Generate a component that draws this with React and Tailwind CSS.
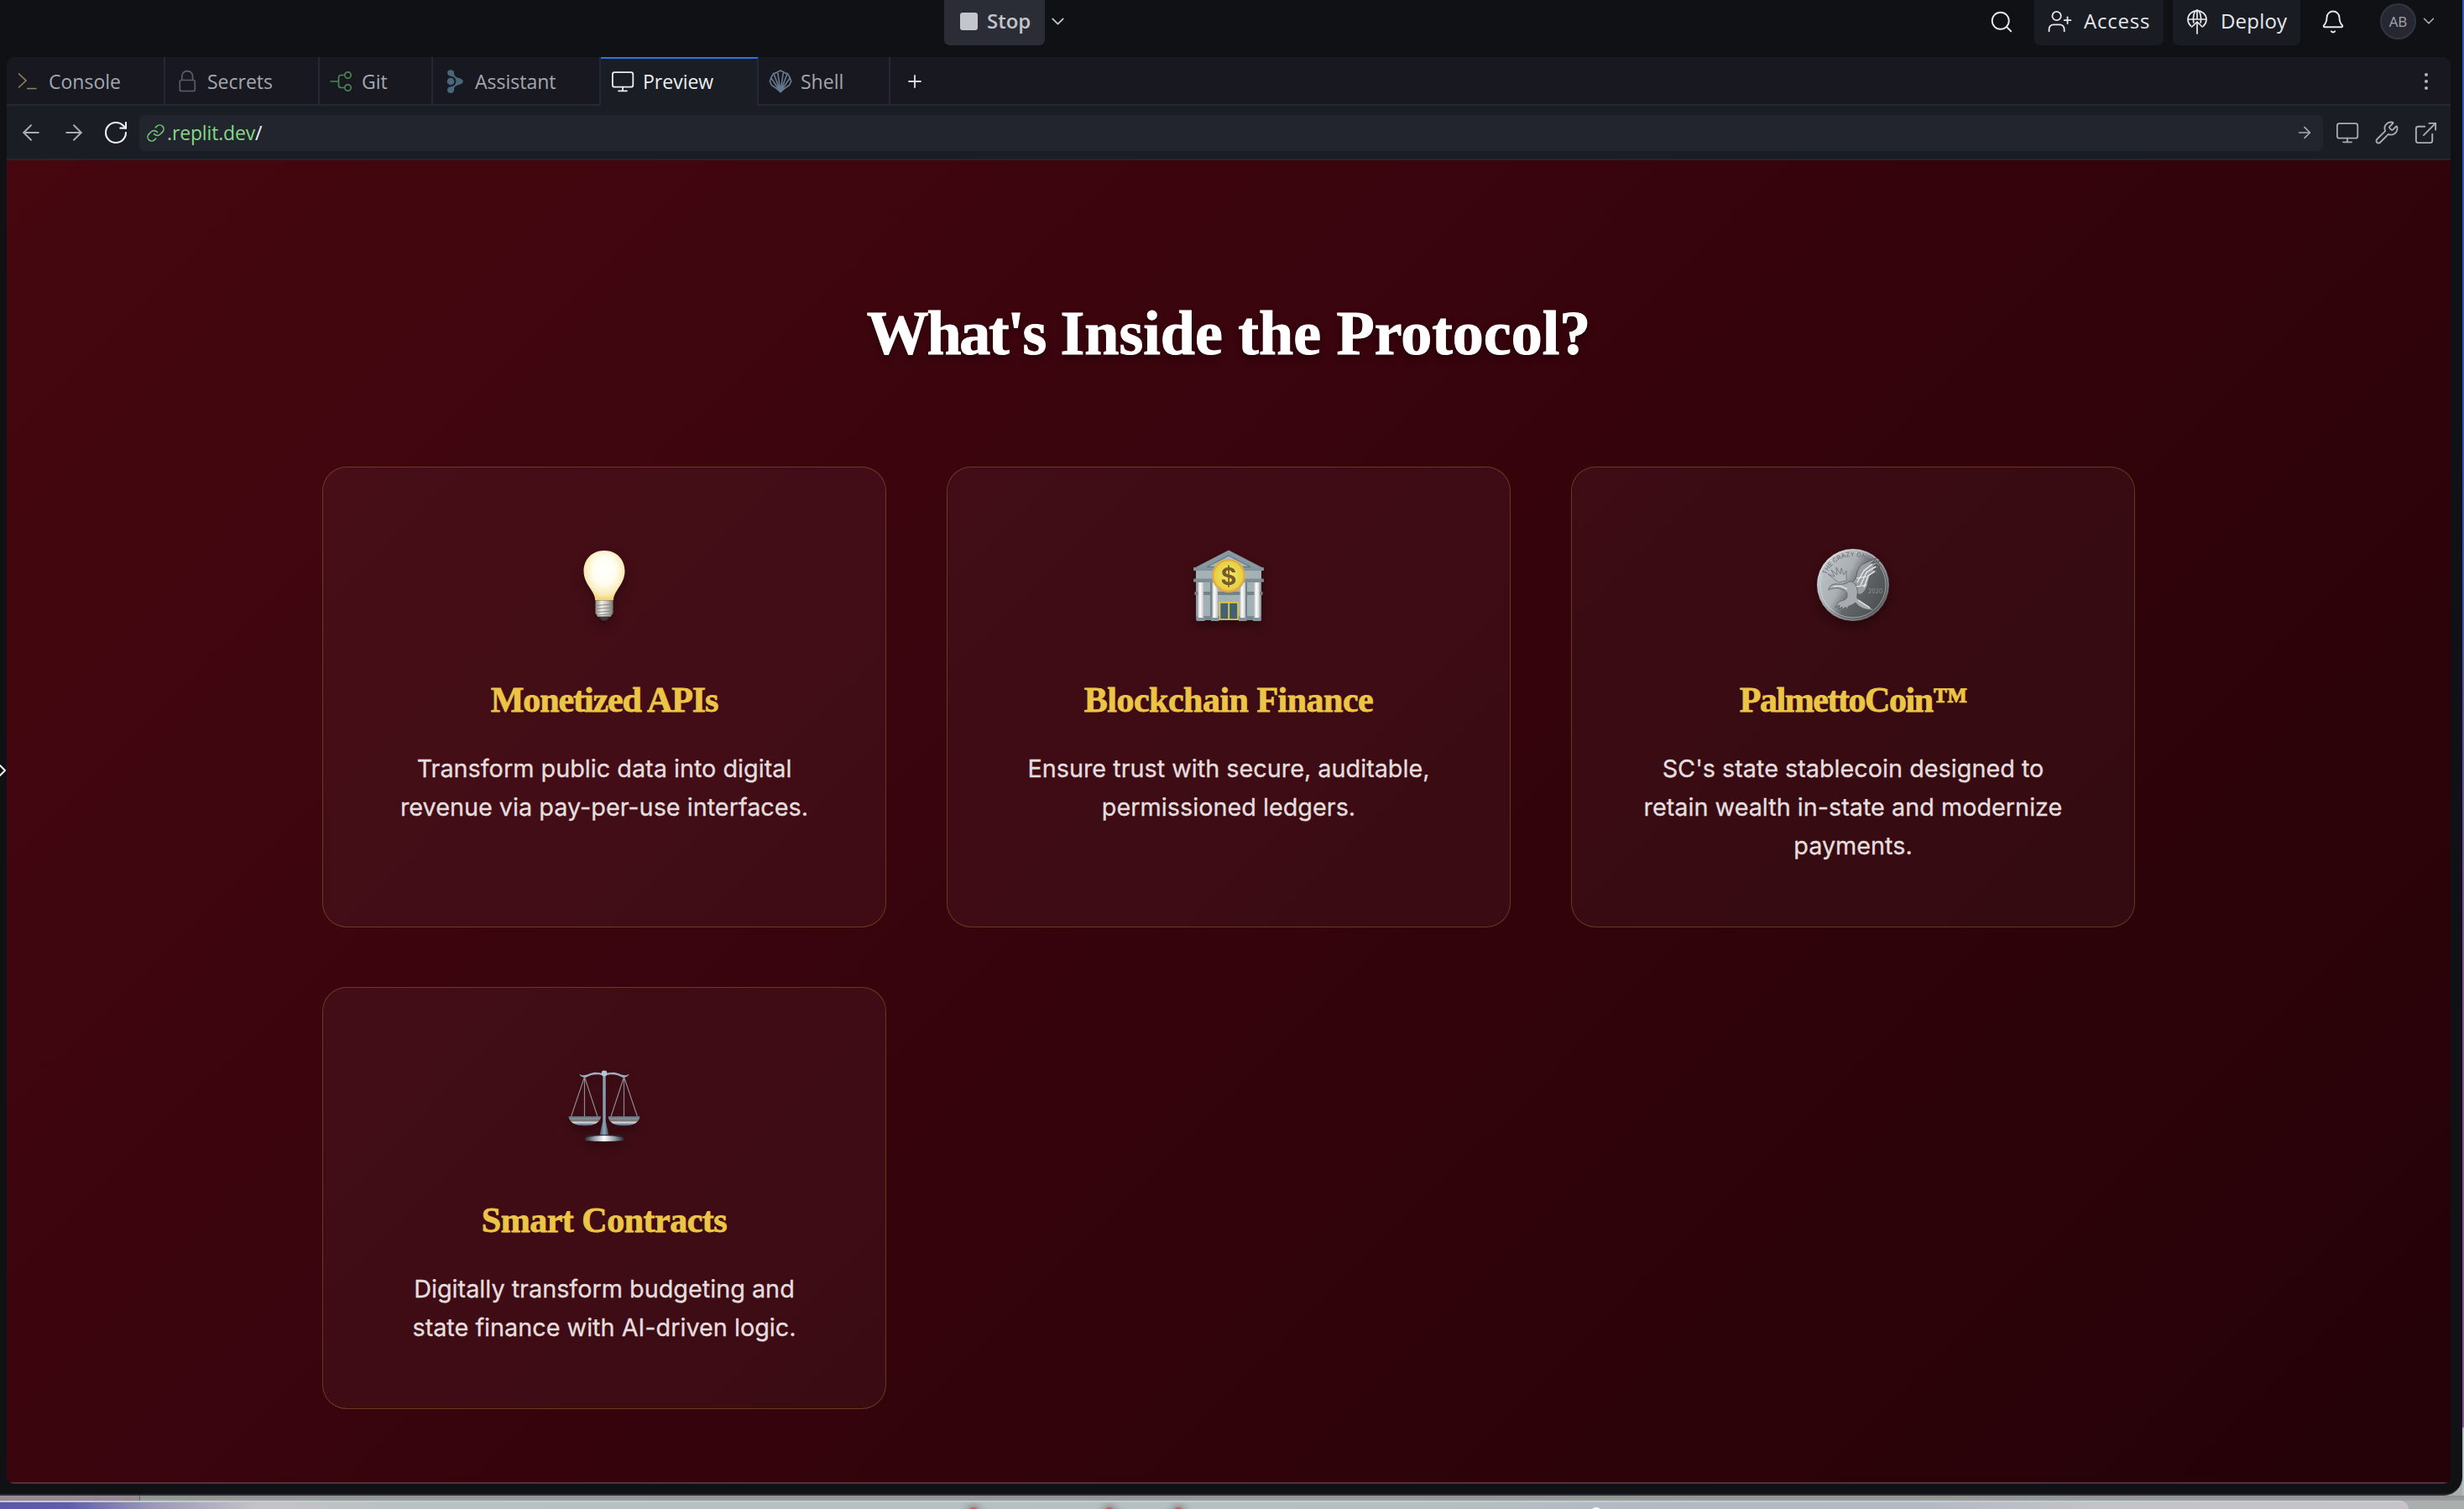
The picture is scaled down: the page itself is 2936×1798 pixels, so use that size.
import React from "react";
import {
  Search,
  UserPlus,
  Bell,
  ChevronDown,
  ChevronRight,
  Plus,
  ArrowLeft,
  ArrowRight,
  RotateCw,
  Link,
  Wrench,
  ExternalLink,
} from "lucide-react";

/* ---------- Tool icons ---------- */

const Svg = ({ children, className = "" }) => (
  <svg viewBox="0 0 30 30" fill="none" className={"h-[30px] w-[30px] shrink-0 " + className}>
    {children}
  </svg>
);

const ConsoleIcon = () => (
  <Svg>
    <path d="M3 5.5l9 8.5-9 8.5M13 23.5h11.5" stroke="#91845a" strokeWidth="1.6" />
  </Svg>
);

const LockIcon = () => (
  <Svg>
    <rect x="6.3" y="13.5" width="18" height="13" rx="2" stroke="#5c5d69" strokeWidth="1.7" />
    <path d="M8.8 13.5V9a6.4 6.4 0 0 1 12.8 0v4.5" stroke="#5c5d69" strokeWidth="1.7" />
  </Svg>
);

const GitIcon = () => (
  <Svg>
    <path
      d="M1.5 15H11.5M18.5 7.5H14.5a3 3 0 0 0-3 3V19.5a3 3 0 0 0 3 3h4"
      stroke="#4d8553"
      strokeWidth="1.7"
    />
    <circle cx="22.5" cy="7.5" r="3.7" stroke="#4d8553" strokeWidth="1.7" />
    <circle cx="22.5" cy="22.5" r="3.7" stroke="#4d8553" strokeWidth="1.7" />
  </Svg>
);

const AssistantIcon = () => (
  <Svg>
    <g fill="#46687a">
      <circle cx="10" cy="15" r="4.3" />
      <path d="M6 4.500c0-4.500 8-4.500 8 0 0 4 2.200 5.500 5 6.200 3 .8 5.800 2 5.800 4.300s-2.800 3.500-5.800 4.300c-2.800.7-5 2.200-5 6.200 0 4.500-8 4.500-8 0 0-2.500 1.700-4 4-4.300 4-.5 6.300-2.700 6.300-6.200S14 9.300 10 8.800C7.700 8.500 6 7 6 4.500z" />
    </g>
  </Svg>
);

const ShellIcon = () => (
  <Svg>
    <g stroke="#66788d" strokeWidth="1.7" strokeLinejoin="round">
      <path d="M15 27.500L10.500 23.500 4.500 19.500 2.300 15 3.800 10.500 6.500 5.800 10.300 4.600 15 2l4.700 2.600 3.800 1.200 2.700 4.700 1.500 4.500-2.200 4.500-6 4z" />
      <path d="M15 27L3.800 11M15 27L7 6M15 27L11.800 5M15 27L18.200 5M15 27L23 6M15 27L26.200 11" />
    </g>
    <path d="M15 28.500l-5-5.500h10z" fill="#66788d" />
  </Svg>
);

const MonitorIcon = ({ className = "" }) => (
  <Svg className={className}>
    <g stroke="currentColor" strokeWidth="1.8" strokeLinecap="round">
      <rect x="2.9" y="4.2" width="24.4" height="17.5" rx="2.5" />
      <path d="M15 21.700v4.300M10 26.300h10" />
    </g>
  </Svg>
);

const DeployIcon = () => (
  <Svg>
    <g stroke="#e6e8eb" strokeWidth="1.7" strokeLinecap="round" strokeLinejoin="round">
      <path d="M7.500 20A11 10.500 0 1 1 22.500 20" />
      <path d="M10.800 16C9.500 9 11.500 2 15 1c3.500 1 5.500 8 4.200 15" />
      <path d="M4.500 12h21M15 1v10" />
      <path d="M15 29V15.500M8.800 21L15 15l6.200 6" />
    </g>
  </Svg>
);

/* ---------- Top bar ---------- */

function TopBar() {
  return (
    <header className="flex h-[68px] shrink-0 items-start text-[24px] font-medium text-[#e6e8eb]">
      <button className="ml-[1125px] flex h-[54px] w-[120px] items-center rounded-b-[7px] bg-[#2b2d36] pb-[3px] pl-[19px] font-semibold text-[#c2c5ca]">
        <span className="h-[21px] w-[21px] rounded-[3px] bg-[#c2c5ca]" />
        <span className="-mt-px ml-[11px]">Stop</span>
      </button>
      <ChevronDown className="mt-[13px] ml-[3px] h-[25px] w-[25px] text-[#c2c5ca]" strokeWidth={1.7} />

      <div className="mr-[29px] ml-auto flex items-center">
        <Search className="mb-[3px] h-[30px] w-[30px]" strokeWidth={1.5} />
        <button className="ml-[24px] flex h-[54px] w-[154px] items-center rounded-b-[7px] bg-[#1a1c23] pb-[3px] pl-[15px]">
          <UserPlus className="h-[31px] w-[31px]" strokeWidth={1.4} />
          <span className="-mt-px ml-[13px] tracking-[0.8px]">Access</span>
        </button>
        <button className="ml-[11px] flex h-[54px] w-[152px] items-center rounded-b-[7px] bg-[#1a1c23] pb-[3px] pl-[14px]">
          <DeployIcon />
          <span className="-mt-px ml-[13px] tracking-[0.2px]">Deploy</span>
        </button>
        <Bell className="mb-[3px] ml-[24px] h-[30px] w-[30px]" strokeWidth={1.5} />
        <span className="mb-[3px] ml-[41px] flex h-[43px] w-[43px] items-center justify-center rounded-full border-2 border-[#33353f] bg-[#252731] text-[17px] font-normal text-[#a3a6ad]">
          AB
        </span>
        <ChevronDown className="mb-[5px] ml-[4px] h-[22px] w-[22px] text-[#b4b7bd]" strokeWidth={1.6} />
      </div>
    </header>
  );
}

/* ---------- Tabs ---------- */

const tabs = [
  { label: "Console", icon: <ConsoleIcon />, width: "w-[189px]" },
  { label: "Secrets", icon: <LockIcon />, width: "w-[184px]" },
  { label: "Git", icon: <GitIcon />, width: "w-[135px]" },
  { label: "Assistant", icon: <AssistantIcon />, width: "w-[200px]" },
  { label: "Preview", icon: <MonitorIcon />, width: "w-[188px]", active: true },
  { label: "Shell", icon: <ShellIcon />, width: "w-[157px]" },
];

function TabBar() {
  return (
    <nav className="flex h-[58px] shrink-0 bg-[#181820] text-[23px] text-[#a4a7ae]">
      {tabs.map((t) => (
        <div
          key={t.label}
          className={
            "flex items-center gap-[9px] border-r-2 border-[#262831] pl-[11px] " +
            t.width +
            (t.active
              ? " border-t-2 border-t-[#2f72e0] bg-[#1a1d24] pb-[2px] font-medium text-[#eceef0]"
              : " border-b-2 border-b-[#262831] pt-[2px]")
          }
        >
          {t.icon}
          <span>{t.label}</span>
        </div>
      ))}
      <div className="flex flex-1 items-center border-b-2 border-[#262831] pt-[2px] pr-[27px] pl-[17px]">
        <Plus className="h-[24px] w-[24px] text-[#d8dade]" strokeWidth={1.9} />
        <div className="ml-auto flex flex-col gap-[4px]">
          <span className="h-[4px] w-[4px] rounded-full bg-[#b4b6bc]" />
          <span className="h-[4px] w-[4px] rounded-full bg-[#b4b6bc]" />
          <span className="h-[4px] w-[4px] rounded-full bg-[#b4b6bc]" />
        </div>
      </div>
    </nav>
  );
}

function AddressBar() {
  return (
    <div className="flex h-[65px] shrink-0 items-center border-b-2 border-[#22262d] bg-[#1a1d24] pt-px text-[#a9acb3]">
      <ArrowLeft className="ml-[14px] h-[30px] w-[30px]" strokeWidth={1.5} />
      <ArrowRight className="ml-[21px] h-[30px] w-[30px]" strokeWidth={1.5} />
      <RotateCw className="ml-[19px] h-[32px] w-[32px] text-[#eceef0]" strokeWidth={1.6} />
      <div className="ml-[12px] flex h-[43px] flex-1 items-center rounded-[7px] bg-[#22252d] pr-[11px] pl-[8px] text-[23px]">
        <Link className="h-[23px] w-[23px] text-[#6fc276]" strokeWidth={1.7} />
        <span className="ml-[2px] tracking-[-0.15px] text-[#86d884]">.replit.dev</span>
        <span className="text-[#f2f3f4]">/</span>
        <ArrowRight className="ml-auto h-[22px] w-[22px]" strokeWidth={1.7} />
      </div>
      <MonitorIcon className="ml-[14px]" />
      <Wrench className="ml-[17px] h-[30px] w-[30px]" strokeWidth={1.5} />
      <ExternalLink className="mr-[14px] ml-[16px] h-[31px] w-[31px]" strokeWidth={1.5} />
    </div>
  );
}

/* ---------- Card illustrations ---------- */

const Art = ({ children }) => (
  <svg
    viewBox="0 0 92 92"
    className="h-[92px] w-[92px] overflow-visible drop-shadow-[0_5px_6px_rgba(0,0,0,0.35)]"
  >
    {children}
  </svg>
);

const Bulb = () => (
  <Art>
    <defs>
      <radialGradient id="glass" cx="50%" cy="40%" r="62%">
        <stop offset="0" stopColor="#ffffff" />
        <stop offset="0.45" stopColor="#fffdf0" />
        <stop offset="0.78" stopColor="#f9eab4" />
        <stop offset="1" stopColor="#edcd6d" />
      </radialGradient>
      <linearGradient id="screw" x1="0" x2="1">
        <stop offset="0" stopColor="#8d8b88" />
        <stop offset="0.35" stopColor="#f1efec" />
        <stop offset="0.7" stopColor="#bdbab6" />
        <stop offset="1" stopColor="#74716e" />
      </linearGradient>
    </defs>
    <path
      d="M46 4C31 4 21.500 15 21.500 28.500c0 10 5 16 9 22.500 3 4.800 4.400 7.500 4.700 12.500h21.600c.3-5 1.700-7.700 4.700-12.500 4-6.500 9-12.500 9-22.500C70.500 15 61 4 46 4z"
      fill="url(#glass)"
    />
    <path d="M35.500 63.500h21v15l-3 4.500h-15l-3-4.500z" fill="url(#screw)" />
    <path
      d="M35.500 69.500l21-1.500M35.500 73.500l21-1.500M35.500 77.500l21-1.500M37 81l18-1.200"
      stroke="#8a8785"
      strokeWidth="1.1"
    />
    <path d="M39 82.500h14l-4.500 5h-5z" fill="#3b3836" />
  </Art>
);

const Bank = () => (
  <Art>
    <defs>
      <linearGradient id="pillar" x1="0" x2="1">
        <stop offset="0" stopColor="#c9c6ca" />
        <stop offset="0.4" stopColor="#ffffff" />
        <stop offset="1" stopColor="#c4c0c6" />
      </linearGradient>
      <radialGradient id="gold">
        <stop offset="0" stopColor="#f3ea62" />
        <stop offset="1" stopColor="#e6cf43" />
      </radialGradient>
    </defs>
    <rect x="7" y="40" width="78" height="46" fill="#8d9da1" />
    <rect x="12" y="42" width="68" height="40" fill="#a2b1b4" />
    <rect x="5.5" y="53" width="81" height="4" fill="#728388" />
    <rect x="7" y="25" width="78" height="16" fill="#a3b2b4" />
    <path d="M46 3.500L87.500 25h-83z" fill="#8798a0" />
    <path d="M46 10L72 23.500H20z" fill="#a9b9be" stroke="#667880" strokeWidth="1.4" />
    <rect x="4" y="24" width="84" height="4" rx="1" fill="#82939a" />
    <rect x="4" y="37.5" width="84" height="4" rx="1" fill="#7c8d94" />
    <rect x="7" y="82" width="78" height="5" fill="#788a91" />
    <path d="M25.500 42v40M66.500 42v40" stroke="#71838a" strokeWidth="3" />
    <rect x="9.5" y="42" width="6.5" height="42" fill="url(#pillar)" />
    <rect x="26.5" y="42" width="6.5" height="42" fill="url(#pillar)" />
    <rect x="59.5" y="42" width="6.5" height="42" fill="url(#pillar)" />
    <rect x="76.5" y="42" width="6.5" height="42" fill="url(#pillar)" />
    <path d="M8 84h9.500v4H8zM25 84h9.500v4H25zM58 84h9.500v4H58zM75 84h9.500v4H75z" fill="#82949c" />
    <rect x="35.5" y="66" width="21.5" height="20" fill="#426177" stroke="#e8c63c" strokeWidth="1.6" />
    <path d="M46.200 66v20" stroke="#e8d03c" strokeWidth="1.8" />
    <circle cx="46" cy="34" r="20" fill="#e0a94a" />
    <circle cx="46" cy="34" r="17.5" fill="url(#gold)" />
    <text
      x="46"
      y="44.5"
      textAnchor="middle"
      fontFamily="Inter, sans-serif"
      fontWeight="700"
      fontSize="29"
      fill="#775a2c"
    >
      $
    </text>
  </Art>
);

const Coin = () => (
  <Art>
    <defs>
      <linearGradient id="silver" x1="0.1" y1="0.25" x2="0.9" y2="0.7">
        <stop offset="0" stopColor="#b9bec2" />
        <stop offset="0.35" stopColor="#a9aeb2" />
        <stop offset="0.58" stopColor="#64676a" />
        <stop offset="1" stopColor="#505356" />
      </linearGradient>
      <linearGradient id="rim" x1="0" y1="0" x2="1" y2="1">
        <stop offset="0" stopColor="#eef0f2" />
        <stop offset="0.5" stopColor="#9b9fa3" />
        <stop offset="1" stopColor="#4e5154" />
      </linearGradient>
      <path id="legend" d="M14 34A34.500 34.500 0 0 1 76 29" />
    </defs>
    <g transform="translate(0 -1)">
      <circle cx="46" cy="46" r="43" fill="url(#rim)" />
      <circle cx="46" cy="46" r="40.5" fill="url(#silver)" />
      <circle cx="46" cy="46" r="39" fill="none" stroke="#dfe2e4" strokeWidth="0.8" opacity="0.7" />
      <text fontFamily="Inter, sans-serif" fontSize="7.5" fontWeight="600" fill="#787c80">
        <textPath href="#legend">THE CRAZY ONES</textPath>
      </text>
      <text x="64" y="56" fontFamily="Inter, sans-serif" fontSize="7" fill="#8d9194">
        2020
      </text>
      {/* far wing */}
      <path
        d="M29 43L16 33l8 3-4-8 7 6-1-9 5 8 1-7 3 8 3-5 0 12z"
        fill="#b3b8bc"
        stroke="#6b7074"
        strokeWidth="0.8"
      />
      {/* raised wing */}
      <path
        d="M42 45c3-3 7-4 8-10 1-7 4-13 10-15l14-6-7 7 11-4-8 7 8-1-8 5 6 1-7 3c-3 2-4 6-5 11-1 6-4 11-8 14-5 1-11-3-14-12z"
        fill="#9a9ea2"
        stroke="#505458"
        strokeWidth="0.8"
      />
      {/* body, head and tail */}
      <path
        d="M17 52c0-5 5-8 11-7 5 .5 9 0 13-3 5-1 9 3 10 9 1 5-1 8 0 11l20 14c-8 0-17-2-22-9-3 2-6 4-8 4l-3 4-1-3-4 4v-4l-4 3 1-5-5 3 3-6c3-3 8-2 10-5 2-4 1-8-3-10-5-2-8-3-12-2-3 0-4 1-6 2z"
        fill="#a6abaf"
        stroke="#5b6064"
        strokeWidth="0.9"
      />
      <path
        d="M51 43l8-14 10-8M55 46l7-15 11-7M59 49l5-14 8-5M50 48l12-2M50 38l12-2M22 48l9-1 8 4M52 64l14 9"
        fill="none"
        stroke="#eef0f2"
        strokeWidth="1.2"
      />
    </g>
  </Art>
);

const Scales = () => (
  <Art>
    <defs>
      <linearGradient id="pan" x1="0" y1="0" x2="0" y2="1">
        <stop offset="0" stopColor="#8f9ca8" />
        <stop offset="0.45" stopColor="#77736d" />
        <stop offset="0.6" stopColor="#d3dce5" />
        <stop offset="1" stopColor="#3c4e65" />
      </linearGradient>
      <linearGradient id="post" x1="0" x2="1">
        <stop offset="0" stopColor="#3f536b" />
        <stop offset="0.5" stopColor="#92a4b6" />
        <stop offset="1" stopColor="#3a4c62" />
      </linearGradient>
      <linearGradient id="foot" x1="0" x2="1">
        <stop offset="0" stopColor="#2d2f35" />
        <stop offset="0.25" stopColor="#9aa2ad" />
        <stop offset="0.5" stopColor="#ffffff" />
        <stop offset="0.75" stopColor="#9aa2ad" />
        <stop offset="1" stopColor="#2d2f35" />
      </linearGradient>
    </defs>
    <path
      d="M22.500 11L6 60M22.500 11v49M22.500 11L38.500 60M69.500 11L53.500 60M69.500 11v49M69.500 11L86 60"
      stroke="#8a8791"
      strokeWidth="1.2"
      fill="none"
    />
    <path
      d="M16 7.500c4 3 8 1.500 12 0 6-2.500 12-2 18 .5 6-2.500 12-3 18-.5 4 1.500 8 3 12 0-2 4-6 5-9 4-7-4-14-4-21-1.500-7-2.500-14-2.500-21 1.500-3 1-7 0-9-4z"
      fill="#9dafba"
    />
    <path d="M44.200 8h3.600v56l3.700 17h-11L44.200 64z" fill="url(#post)" />
    <circle cx="46" cy="7" r="3.4" fill="#b7c6d2" />
    <path
      d="M3.500 58.500h38.500c-1 7-8 11-19.200 11S4.500 65.500 3.500 58.500zM50.500 58.500h38c-1 7-8 11-19 11s-18-4-19-11z"
      fill="url(#pan)"
    />
    <path d="M4 59h37.500M51 59h37" stroke="#5c7591" strokeWidth="1.4" />
    <path d="M28 80h36c3 1 5 3 5.500 7H22.500c.5-4 2.500-6 5.500-7z" fill="#26272c" />
    <path d="M23 83.500q23-5 46 0v3.500q-23 2-46 0z" fill="url(#foot)" />
  </Art>
);

/* ---------- Page content ---------- */

const cards = [
  {
    art: <Bulb />,
    title: "Monetized APIs",
    tracking: "tracking-[-1.1px]",
    lines: ["Transform public data into digital", "revenue via pay-per-use interfaces."],
  },
  {
    art: <Bank />,
    title: "Blockchain Finance",
    tracking: "tracking-[-0.5px]",
    lines: ["Ensure trust with secure, auditable,", "permissioned ledgers."],
  },
  {
    art: <Coin />,
    title: "PalmettoCoin™",
    tracking: "tracking-[-1.45px]",
    lines: ["SC's state stablecoin designed to", "retain wealth in-state and modernize", "payments."],
  },
  {
    art: <Scales />,
    title: "Smart Contracts",
    tracking: "tracking-[-0.5px]",
    lines: ["Digitally transform budgeting and", "state finance with AI-driven logic."],
  },
];

function Card({ art, title, tracking, lines }) {
  return (
    <article className="flex flex-col items-center rounded-[29px] border border-[#d4a037]/30 bg-white/[0.035] pt-[95px] pb-[73px] text-center">
      {art}
      <h3
        className={
          "mt-[65px] font-['Liberation_Serif',serif] text-[42px] leading-[50px] font-bold text-[#ecc546] [-webkit-text-stroke:0.8px_#ecc546] " +
          tracking
        }
      >
        {title}
      </h3>
      <p className="mt-[34px] font-['Inter',sans-serif] text-[28.8px] leading-[46px] text-[#e5dedf] [-webkit-text-stroke:0.3px_#e5dedf]">
        {lines.map((l) => (
          <span key={l} className="block whitespace-nowrap">
            {l}
          </span>
        ))}
      </p>
    </article>
  );
}

function Preview() {
  return (
    <main className="flex-1 border-b-2 border-[#56303a] bg-[linear-gradient(135deg,#46070f_0%,#3c050e_32%,#34030b_55%,#2c0309_78%,#240208_100%)] pt-[161px]">
      <h1 className="text-center font-['Liberation_Serif',serif] text-[74px] leading-[90px] font-bold text-white [-webkit-text-stroke:1px_white] [text-shadow:0_4px_8px_rgba(0,0,0,0.45)]">
        <span className="tracking-[-2.3px]">What's</span> Inside the Protocol?
      </h1>
      <section className="mx-auto mt-[114px] grid w-[2160px] grid-cols-3 gap-x-[72px] gap-y-[71px]">
        {cards.map((c) => (
          <Card key={c.title} {...c} />
        ))}
      </section>
    </main>
  );
}

/* ---------- Desktop dock under the window ---------- */

function Dock() {
  return (
    <footer className="h-[16px] shrink-0">
      <div className="flex h-[6px]">
        <div className="w-[167px] border-r border-[#5f6a6c] bg-[#988993]" />
        <div className="flex-1 bg-gradient-to-b from-[#8c908e] to-[#9b9e9c]" />
      </div>
      <div className="flex h-[10px] w-[2870px] overflow-hidden rounded-tr-[24px] border-t-2 border-[#c3cccd] bg-[linear-gradient(90deg,#5b58a8_0px,#5f5dab_80px,#9a98b8_180px,#c5c3c8_310px,#b8c1c3_480px,#b5bfc1_1700px,#b2b9c3_2000px,#b4bac3_2300px,#c2c3c8_2500px,#c5c3c9_2870px)] pl-[1154px]">
        <span className="mt-[6px] h-[12px] w-[12px] shrink-0 rounded-full bg-[#cf5b58] shadow-[0_0_8px_3px_rgba(60,60,60,0.4)]" />
        <span className="mt-[6px] ml-[150px] h-[12px] w-[12px] shrink-0 rounded-full bg-[#cf5b58] shadow-[0_0_8px_3px_rgba(60,60,60,0.4)]" />
        <span className="mt-[6px] ml-[70px] h-[12px] w-[12px] shrink-0 rounded-full bg-[#cf5b58] shadow-[0_0_8px_3px_rgba(60,60,60,0.4)]" />
        <span className="mt-[6px] ml-[485px] h-[14px] w-[14px] shrink-0 rounded-full bg-white" />
      </div>
    </footer>
  );
}

export default function App() {
  return (
    <div className="flex h-[1798px] w-[2936px] flex-col overflow-hidden bg-[#a9afaf] font-['Open_Sans',sans-serif]">
      <div className="flex h-[1782px] shrink-0">
        <div className="relative flex w-[2934px] flex-col rounded-br-[22px] border-b-2 border-[#2a2c31] bg-[#0f1115]">
          <TopBar />
          <div className="mr-[14px] mb-[12px] ml-[8px] flex flex-1 flex-col overflow-hidden rounded-[9px]">
            <TabBar />
            <AddressBar />
            <Preview />
          </div>
          <ChevronRight
            className="absolute top-[906px] left-[-9px] h-[24px] w-[24px] text-[#eceef0]"
            strokeWidth={2}
          />
        </div>
        <div className="w-[2px] bg-[linear-gradient(180deg,#2b56c0_0px,#2b56c0_500px,#8a5599_1200px,#8a5599_1700px,#b5bcbd_1702px)]" />
      </div>
      <Dock />
    </div>
  );
}
